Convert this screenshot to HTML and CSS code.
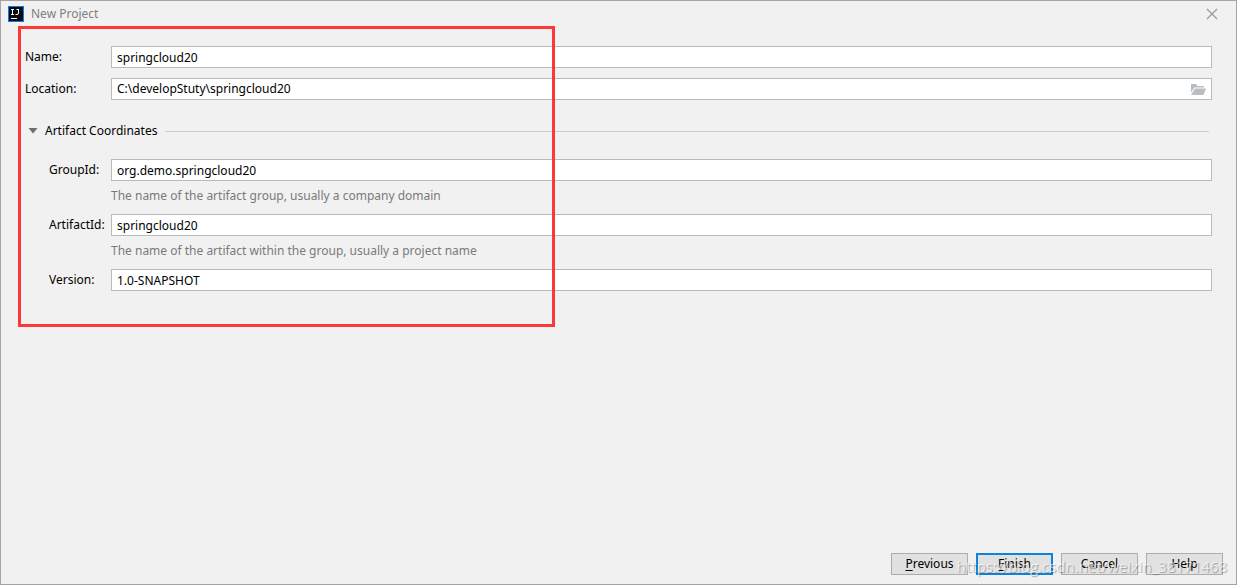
FILE: index.html
```html
<!DOCTYPE html>
<html lang="en">
<head>
<meta charset="utf-8">
<title>New Project</title>
<link rel="stylesheet" href="styles.css">
</head>
<body>
<main class="dialog">
  <header class="titlebar">
    <svg class="logo" viewBox="0 0 16 16" aria-hidden="true">
      <rect width="16" height="16" fill="#087cf5"/>
      <rect x="1" y="1" width="14" height="14" fill="#0a0a0a"/>
      <path d="M3 3.500h3M4.500 3v5M3 8.500h3M10.500 3v4q0 1.500-1.500 1.500H7.500M8.500 3.500h2" fill="none" stroke="#fff" stroke-width="1"/>
      <path d="M3 12.500h6" stroke="#fff" stroke-width="1"/>
    </svg>
    <h1 class="title">New Project</h1>
    <button class="close" type="button" aria-label="Close">
      <svg viewBox="0 0 12 12" aria-hidden="true"><path d="M1 1l10 10M11 1L1 11" stroke="#999" stroke-width="1.200"/></svg>
    </button>
  </header>
  <form class="form">
    <div class="row">
      <label class="label" for="name">Name:</label>
      <input class="field" id="name" type="text" value="springcloud20">
    </div>
    <div class="row">
      <label class="label" for="location">Location:</label>
      <div class="field browse">
        <input class="path" id="location" type="text" value="C:\developStuty\springcloud20">
        <button class="folder" type="button" aria-label="Browse">
          <svg viewBox="0 0 16 12" aria-hidden="true"><path d="M1 9.500V1h5l1.500 2H14v1.500H4.500z" fill="#b9bec2"/><path d="M5 5.500h11L13.500 12H1z" fill="#b9bec2"/></svg>
        </button>
      </div>
    </div>
    <button class="section" type="button" aria-expanded="true">
      <svg class="arrow" viewBox="0 0 10 6" aria-hidden="true"><path d="M0.500 0h9L5 5.500z" fill="#6e6e6e"/></svg>
      <span>Artifact Coordinates</span>
      <span class="rule"></span>
    </button>
    <div class="row nested">
      <label class="label" for="group">GroupId:</label>
      <input class="field" id="group" type="text" value="org.demo.springcloud20">
    </div>
    <p class="hint">The name of the artifact group, usually a company domain</p>
    <div class="row nested">
      <label class="label" for="artifact">ArtifactId:</label>
      <input class="field" id="artifact" type="text" value="springcloud20">
    </div>
    <p class="hint">The name of the artifact within the group, usually a project name</p>
    <div class="row nested">
      <label class="label" for="version">Version:</label>
      <input class="field" id="version" type="text" value="1.0-SNAPSHOT">
    </div>
  </form>
  <footer class="actions">
    <button class="button" type="button"><u>P</u>revious</button>
    <button class="button primary" type="button"><u>F</u>inish</button>
    <button class="button" type="button">Cancel</button>
    <button class="button" type="button">Help</button>
  </footer>
  <div class="highlight"></div>
  <div class="watermark">https://blog.csdn.net/weixin_38171468</div>
</main>
</body>
</html>
```
FILE: styles.css
```css
* {
  box-sizing: border-box;
}

body {
  margin: 0;
}

body,
input,
button {
  font-family: "Noto Sans", "Open Sans", sans-serif;
  font-size: 12px;
  line-height: 20px;
  color: #000;
}

button {
  padding: 0;
  border: 0;
  background: none;
}

svg {
  display: block;
}

.dialog {
  position: relative;
  display: flex;
  flex-direction: column;
  min-height: 100vh;
  border: 1px solid #a5a5a5;
  background: #f1f1f1;
}

.titlebar {
  display: flex;
  align-items: center;
  gap: 7px;
  height: 26px;
  padding: 0 18px 0 7px;
}

.logo {
  width: 16px;
  height: 16px;
}

.title {
  flex: 1;
  margin: 0;
  font-size: 12px;
  font-weight: 400;
  color: #808080;
}

.close svg {
  width: 12px;
  height: 12px;
}

.form {
  flex: 1;
  display: flex;
  flex-direction: column;
  padding: 19px 24px 0;
}

.row {
  display: flex;
  align-items: center;
}

.row + .row {
  margin-top: 10px;
}

.label {
  width: 86px;
}

.nested {
  padding-left: 24px;
}

.nested .label {
  width: 62px;
}

.field {
  flex: 1;
  min-width: 0;
  height: 22px;
  padding: 0 5px;
  border: 1px solid #bababa;
  border-radius: 0;
  background: #fff;
}

.browse {
  display: flex;
  align-items: center;
}

.path {
  flex: 1;
  min-width: 0;
  height: 20px;
  padding: 0;
  border: 0;
  background: none;
}

.folder svg {
  width: 16px;
  height: 12px;
}

.section {
  display: flex;
  align-items: center;
  margin: 21px 3px 18px;
  text-align: left;
}

.arrow {
  width: 10px;
  height: 6px;
  margin-right: 7px;
}

.rule {
  flex: 1;
  height: 1px;
  margin-left: 8px;
  background: #cdcdcd;
}

.hint {
  margin: 5px 0 8px 86px;
  color: #7a7a7a;
}

.actions {
  display: flex;
  justify-content: flex-end;
  gap: 8px;
  padding: 0 13px 9px;
}

.button {
  width: 77px;
  height: 22px;
  border: 1px solid #adadad;
  background: #e1e1e1;
}

.button u {
  text-underline-offset: 2px;
}

.primary {
  border: 2px solid #0a84dc;
  line-height: 18px;
}

.highlight {
  position: absolute;
  top: 25px;
  left: 17px;
  width: 537px;
  height: 301px;
  border: 3px solid #fc3838;
  pointer-events: none;
}

.watermark {
  position: absolute;
  right: 9px;
  bottom: 8px;
  font-family: "Open Sans", sans-serif;
  font-size: 15px;
  color: rgba(255, 255, 255, 0.65);
  text-shadow: 1px 1px 1px rgba(0, 0, 0, 0.3);
  pointer-events: none;
}
```
